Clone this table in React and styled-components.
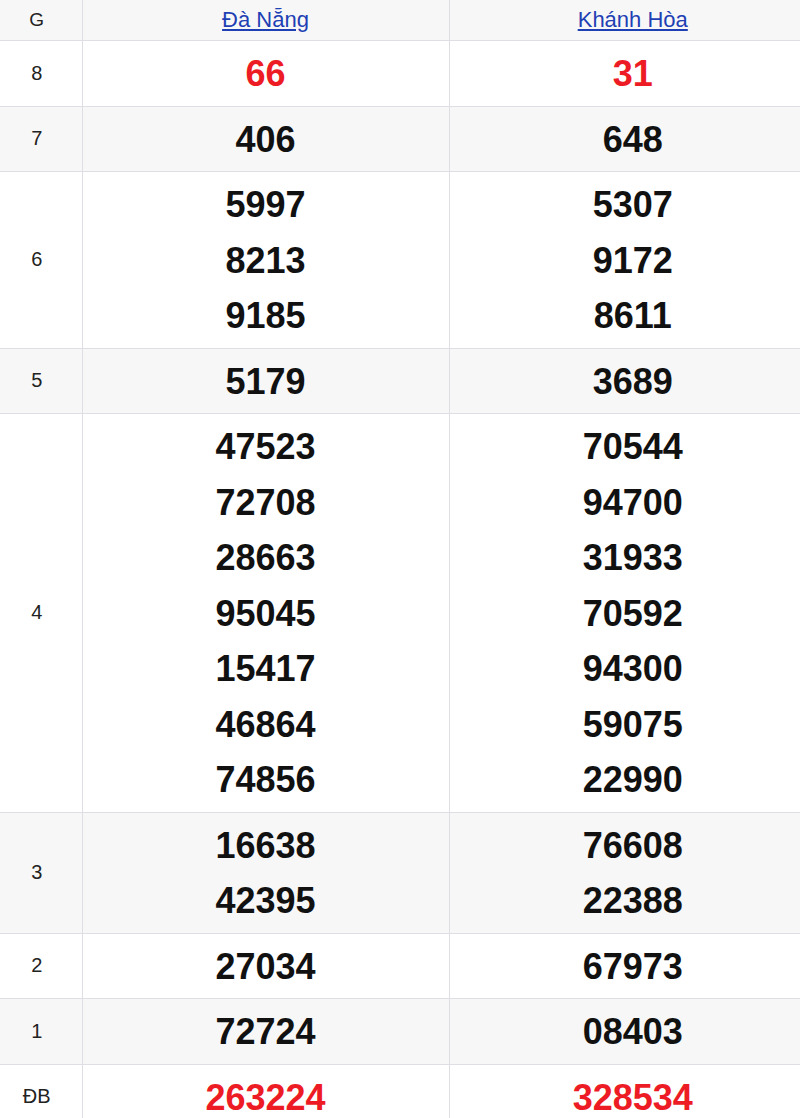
import React from 'react';
import styled, { createGlobalStyle } from 'styled-components';

const GlobalStyle = createGlobalStyle`
  html, body {
    margin: 0;
    padding: 0;
    background: #fff;
    overflow: hidden;
  }
  body {
    font-family: "Liberation Sans", Arial, sans-serif;
  }
`;

const Table = styled.table`
  width: 816px;
  border-collapse: collapse;
  table-layout: fixed;
`;

const Row = styled.tr`
  background-color: ${({ shaded }) => (shaded ? '#f7f7f7' : '#ffffff')};
`;

const HeadCell = styled.th`
  height: 40px;
  padding: 0;
  font-weight: normal;
  font-size: ${({ small }) => (small ? '19px' : '22px')};
  color: #222;
  text-align: center;
  vertical-align: middle;
  border-bottom: 1px solid #dedee4;
  border-left: 1px solid #dedee4;
  &:first-child {
    border-left: none;
    padding-right: 8px;
  }

  a {
    color: #1f3fb4;
    text-decoration: underline;
  }
`;

const LabelCell = styled.td`
  padding: 0 8px 0 0;
  font-size: 20px;
  color: #222;
  text-align: center;
  vertical-align: middle;
  border-bottom: 1px solid #dedee4;
`;

const NumCell = styled.td`
  padding: 5px 0 4px;
  text-align: center;
  vertical-align: middle;
  border-bottom: 1px solid #dedee4;
  border-left: 1px solid #dedee4;
`;

const Num = styled.div`
  font-size: 36px;
  font-weight: bold;
  line-height: 55.5px;
  color: ${({ red }) => (red ? '#ed1c24' : '#111')};
`;

const prizes = [
  { g: '8', a: ['66'], b: ['31'], red: true },
  { g: '7', a: ['406'], b: ['648'] },
  { g: '6', a: ['5997', '8213', '9185'], b: ['5307', '9172', '8611'] },
  { g: '5', a: ['5179'], b: ['3689'] },
  {
    g: '4',
    a: ['47523', '72708', '28663', '95045', '15417', '46864', '74856'],
    b: ['70544', '94700', '31933', '70592', '94300', '59075', '22990'],
  },
  { g: '3', a: ['16638', '42395'], b: ['76608', '22388'] },
  { g: '2', a: ['27034'], b: ['67973'] },
  { g: '1', a: ['72724'], b: ['08403'] },
  { g: 'ĐB', a: ['263224'], b: ['328534'], red: true },
];

const Numbers = ({ list, red }) => (
  <NumCell>
    {list.map((n, i) => (
      <Num key={i} red={red}>
        {n}
      </Num>
    ))}
  </NumCell>
);

export default function App() {
  return (
    <>
      <GlobalStyle />
      <Table>
        <colgroup>
          <col style={{ width: 82 }} />
          <col style={{ width: 367 }} />
          <col style={{ width: 367 }} />
        </colgroup>
        <thead>
          <Row shaded>
            <HeadCell small>G</HeadCell>
            <HeadCell>
              <a href="#">Đà Nẵng</a>
            </HeadCell>
            <HeadCell>
              <a href="#">Khánh Hòa</a>
            </HeadCell>
          </Row>
        </thead>
        <tbody>
          {prizes.map((p, i) => (
            <Row key={p.g} shaded={i % 2 === 1}>
              <LabelCell>{p.g}</LabelCell>
              <Numbers list={p.a} red={p.red} />
              <Numbers list={p.b} red={p.red} />
            </Row>
          ))}
        </tbody>
      </Table>
    </>
  );
}
